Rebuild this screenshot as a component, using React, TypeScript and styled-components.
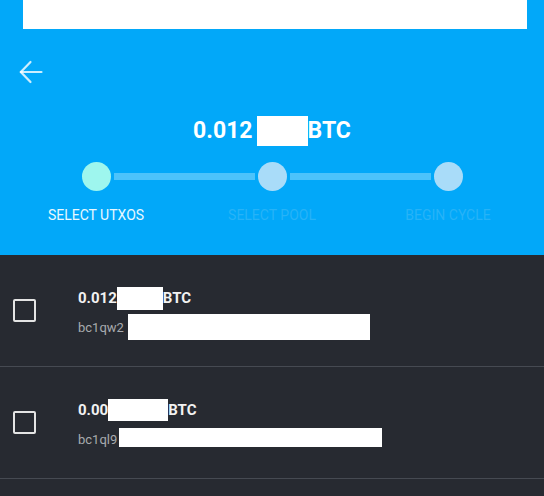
import styled, { createGlobalStyle } from "styled-components";

const GlobalStyle = createGlobalStyle`
  html, body {
    margin: 0;
    padding: 0;
    background: #272a31;
    font-family: Roboto, "Liberation Sans", sans-serif;
  }
  * {
    box-sizing: border-box;
  }
`;

const Header = styled.header`
  background: #02a8f9;
  height: 255px;
  display: flex;
  flex-direction: column;
`;

const TopBar = styled.div`
  height: 29px;
  margin: 0 17px 0 23px;
  background: #ffffff;
`;

const BackButton = styled.button`
  margin: 31px 0 0 19px;
  width: 24px;
  height: 24px;
  padding: 0;
  border: 0;
  background: none;
  cursor: pointer;
  display: flex;
`;

const Title = styled.h1`
  margin: 33px 0 0;
  height: 28px;
  display: flex;
  align-items: center;
  justify-content: center;
  font-size: 23px;
  line-height: 28px;
  font-weight: 700;
  color: #ffffff;
`;

const Redact = styled.span<{ w: number; h: number; gap?: number; shift?: number }>`
  display: inline-block;
  flex: none;
  width: ${(p) => p.w}px;
  height: ${(p) => p.h}px;
  margin-left: ${(p) => p.gap || 0}px;
  transform: translateY(${(p) => p.shift || 0}px);
  background: #ffffff;
`;

const Stepper = styled.div`
  margin-top: 17px;
  padding: 0 8px;
  display: grid;
  grid-template-columns: repeat(3, 1fr);
`;

const Step = styled.div`
  display: flex;
  flex-direction: column;
  align-items: center;
`;

const Track = styled.div`
  width: 100%;
  height: 29px;
  display: flex;
  align-items: center;
`;

const Connector = styled.div<{ show: boolean; side: "left" | "right" }>`
  flex: 1;
  height: 7px;
  background: ${(p) => (p.show ? "#4cc3fb" : "transparent")};
  margin-${(p) => (p.side === "left" ? "right" : "left")}: 3px;
`;

const Dot = styled.div<{ active: boolean }>`
  width: 29px;
  height: 29px;
  border-radius: 50%;
  flex: none;
  background: ${(p) => (p.active ? "#9ef6ee" : "#a9dcf9")};
`;

const StepLabel = styled.span<{ active: boolean }>`
  margin-top: 16px;
  font-size: 14px;
  line-height: 16px;
  color: ${(p) => (p.active ? "#e8f8ff" : "#27b3f7")};
`;

const List = styled.ul`
  margin: 0;
  padding: 0;
  list-style: none;
`;

const Row = styled.li`
  height: 112px;
  border-bottom: 1px solid #464a52;
  display: flex;
  align-items: center;
`;

const Checkbox = styled.span`
  width: 23px;
  height: 23px;
  margin-left: 13px;
  border: 2.5px solid #e4e4e4;
  border-radius: 2px;
  flex: none;
`;

const Info = styled.div`
  margin-left: 42px;
  padding-top: 4px;
  display: flex;
  flex-direction: column;
  gap: 13px;
`;

const Amount = styled.div`
  height: 18px;
  display: flex;
  align-items: center;
  font-size: 15px;
  line-height: 18px;
  font-weight: 700;
  color: #f2f2f2;
`;

const Address = styled.div`
  height: 16px;
  display: flex;
  align-items: center;
  font-size: 13px;
  line-height: 16px;
  color: #a8aaae;
`;

const steps = ["SELECT UTXOS", "SELECT POOL", "BEGIN CYCLE"];

const utxos = [
  { head: "0.012", amountW: 46, amountH: 23, addr: "bc1qw2", addrW: 242, addrH: 26, addrGap: 4, addrShift: -1 },
  { head: "0.00", amountW: 60, amountH: 22, addr: "bc1ql9", addrW: 263, addrH: 19, addrGap: 2, addrShift: -3 },
];

export default function App() {
  return (
    <>
      <GlobalStyle />
      <Header>
        <TopBar />
        <BackButton aria-label="back">
          <svg width="24" height="24" viewBox="0 0 24 24" fill="none" stroke="rgba(255,255,255,0.8)" strokeWidth="2.2" strokeLinecap="round" strokeLinejoin="round">
            <path d="M22.5 12H1.8" />
            <path d="M11.5 2L1.8 12l9.7 10" />
          </svg>
        </BackButton>
        <Title>
          0.012
          <Redact w={51} h={30} gap={4} />
          BTC
        </Title>
        <Stepper>
          {steps.map((label, i) => (
            <Step key={label}>
              <Track>
                <Connector side="left" show={i > 0} />
                <Dot active={i === 0} />
                <Connector side="right" show={i < steps.length - 1} />
              </Track>
              <StepLabel active={i === 0}>{label}</StepLabel>
            </Step>
          ))}
        </Stepper>
      </Header>
      <List>
        {utxos.map((u, i) => (
          <Row key={i}>
            <Checkbox />
            <Info>
              <Amount>
                {u.head}
                <Redact w={u.amountW} h={u.amountH} />
                BTC
              </Amount>
              <Address>
                {u.addr}
                <Redact w={u.addrW} h={u.addrH} gap={u.addrGap} shift={u.addrShift} />
              </Address>
            </Info>
          </Row>
        ))}
        {/* next utxo starts below the fold */}
        <Row />
      </List>
    </>
  );
}
